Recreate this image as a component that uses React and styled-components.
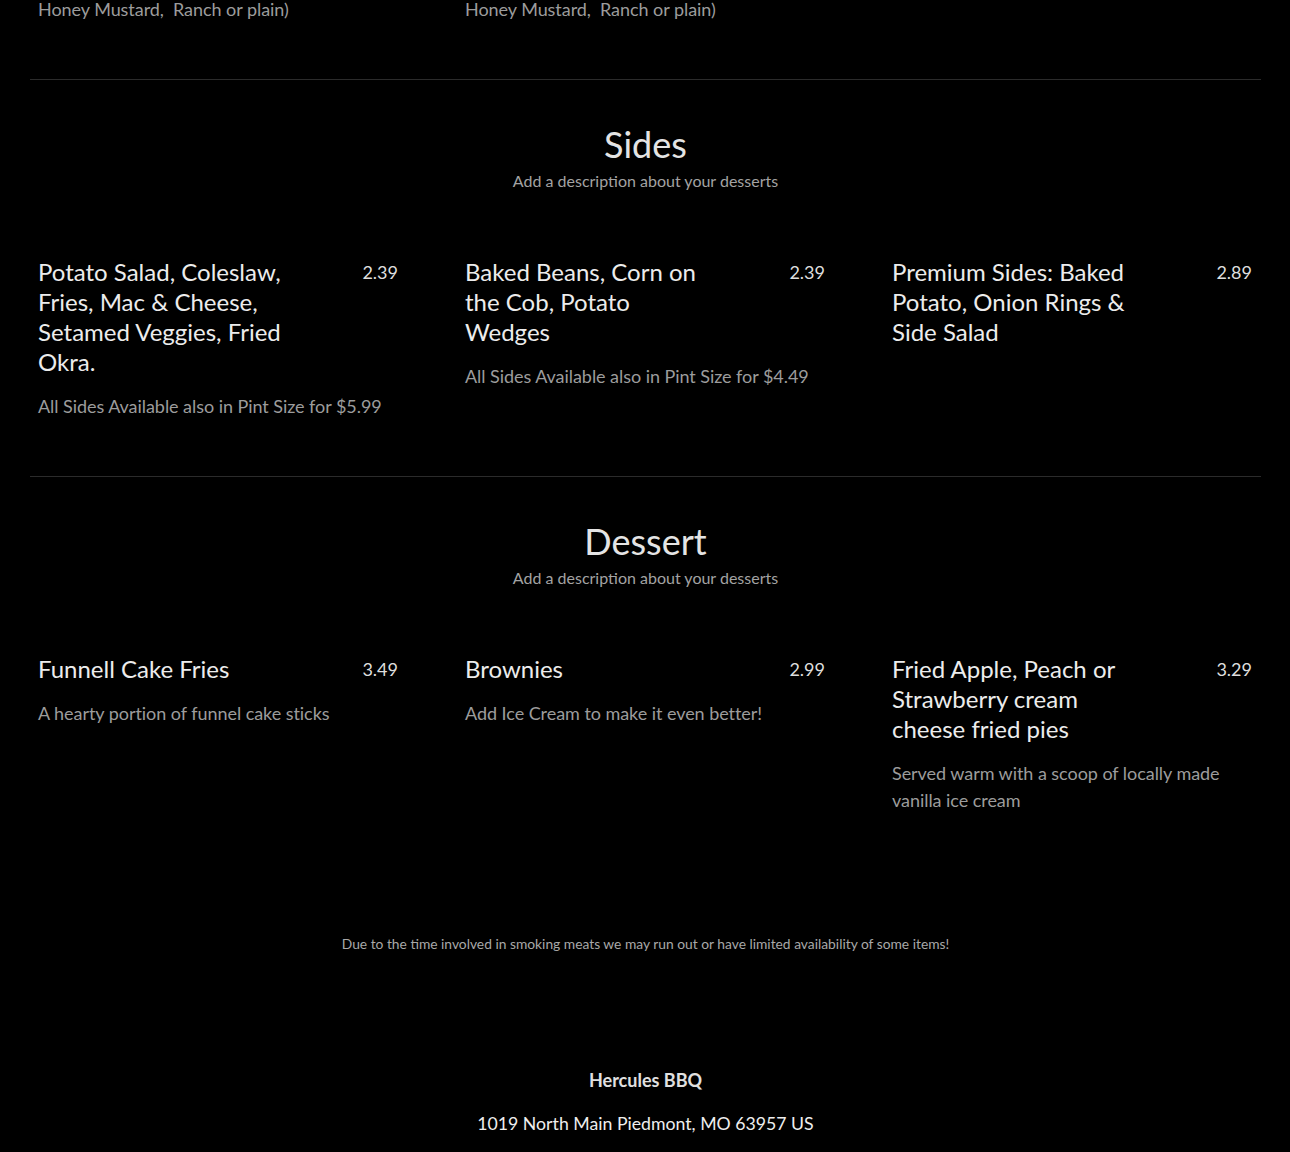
import React from 'react';
import styled, { createGlobalStyle } from 'styled-components';

const GlobalStyle = createGlobalStyle`
  html, body {
    margin: 0;
    padding: 0;
    background: #000;
  }
  body {
    font-family: Lato, "Open Sans", sans-serif;
    color: #e6e6e6;
  }
`;

const Page = styled.div`
  background: #000;
  padding: 0 29px 40px 30px;
  overflow: hidden;
`;

const Section = styled.section`
  padding: ${(props) => (props.$partial ? '0' : '40px')} 0 56px;
  margin-top: ${(props) => (props.$partial ? '-4px' : '0')};
  border-bottom: ${(props) => (props.$last ? 'none' : '1px solid #2b2b2b')};
`;

const SectionTitle = styled.h2`
  margin: 0;
  font-size: 36px;
  line-height: 44px;
  padding-top: 2px;
  font-weight: 400;
  text-align: center;
  color: #e4e4e4;
`;

const SectionSubtitle = styled.p`
  margin: 3px 0 0;
  font-size: 16px;
  line-height: 24px;
  text-align: center;
  color: #a3a3a3;
`;

const ItemGrid = styled.div`
  display: grid;
  grid-template-columns: repeat(3, 360px);
  column-gap: 67px;
  padding: 0 8px;
  margin-top: ${(props) => (props.$partial ? '0' : '64px')};
`;

const Item = styled.div`
  display: flex;
  flex-direction: column;
`;

const ItemHead = styled.div`
  display: flex;
  justify-content: space-between;
  align-items: flex-start;
  margin-bottom: 16px;
`;

const ItemName = styled.h3`
  margin: 0;
  max-width: 70%;
  font-size: 24px;
  line-height: 30px;
  font-weight: 400;
  color: #ececec;
`;

const Price = styled.span`
  font-size: 18px;
  line-height: 30px;
  color: #dedede;
`;

const ItemDesc = styled.p`
  margin: 0;
  font-size: 18px;
  line-height: 27px;
  letter-spacing: -0.05px;
  color: #9c9c9c;
  white-space: pre-wrap;
`;

const Notice = styled.p`
  margin: 63px 0 0;
  font-size: 13.8px;
  line-height: 21px;
  text-align: center;
  color: #a8a8a8;
`;

const Footer = styled.footer`
  margin-top: 113px;
  display: flex;
  flex-direction: column;
  align-items: center;
  gap: 16px;
`;

const BusinessName = styled.div`
  font-size: 18px;
  line-height: 27px;
  font-weight: 700;
  color: #e0e0e0;
`;

const Address = styled.div`
  font-size: 17.7px;
  line-height: 27px;
  color: #eeeeee;
`;

const sections = [
  {
    title: 'Sides',
    subtitle: 'Add a description about your desserts',
    items: [
      {
        name: 'Potato Salad, Coleslaw, Fries, Mac & Cheese, Setamed Veggies, Fried Okra.',
        price: '2.39',
        desc: 'All Sides Available also in Pint Size for $5.99'
      },
      {
        name: 'Baked Beans, Corn on the Cob, Potato Wedges',
        price: '2.39',
        desc: 'All Sides Available also in Pint Size for $4.49'
      },
      {
        name: 'Premium Sides: Baked Potato, Onion Rings & Side Salad',
        price: '2.89'
      }
    ]
  },
  {
    title: 'Dessert',
    subtitle: 'Add a description about your desserts',
    items: [
      {
        name: 'Funnell Cake Fries',
        price: '3.49',
        desc: 'A hearty portion of funnel cake sticks'
      },
      {
        name: 'Brownies',
        price: '2.99',
        desc: 'Add Ice Cream to make it even better!'
      },
      {
        name: 'Fried Apple, Peach or Strawberry cream cheese fried pies',
        price: '3.29',
        desc: 'Served warm with a scoop of locally made vanilla ice cream'
      }
    ]
  }
];

const MenuItem = ({ item }) => (
  <Item>
    <ItemHead>
      <ItemName>{item.name}</ItemName>
      <Price>{item.price}</Price>
    </ItemHead>
    {item.desc ? <ItemDesc>{item.desc}</ItemDesc> : null}
  </Item>
);

export default function App() {
  return (
    <>
      <GlobalStyle />
      <Page>
        <Section $partial>
          <ItemGrid $partial>
            <ItemDesc>{'Honey Mustard,  Ranch or plain)'}</ItemDesc>
            <ItemDesc>{'Honey Mustard,  Ranch or plain)'}</ItemDesc>
            <div />
          </ItemGrid>
        </Section>
        {sections.map((section, i) => (
          <Section key={section.title} $last={i === sections.length - 1}>
            <SectionTitle>{section.title}</SectionTitle>
            <SectionSubtitle>{section.subtitle}</SectionSubtitle>
            <ItemGrid>
              {section.items.map((item) => (
                <MenuItem key={item.name} item={item} />
              ))}
            </ItemGrid>
          </Section>
        ))}
        <Notice>
          Due to the time involved in smoking meats we may run out or have limited availability of some items!
        </Notice>
        <Footer>
          <BusinessName>Hercules BBQ</BusinessName>
          <Address>1019 North Main Piedmont, MO 63957 US</Address>
        </Footer>
      </Page>
    </>
  );
}
